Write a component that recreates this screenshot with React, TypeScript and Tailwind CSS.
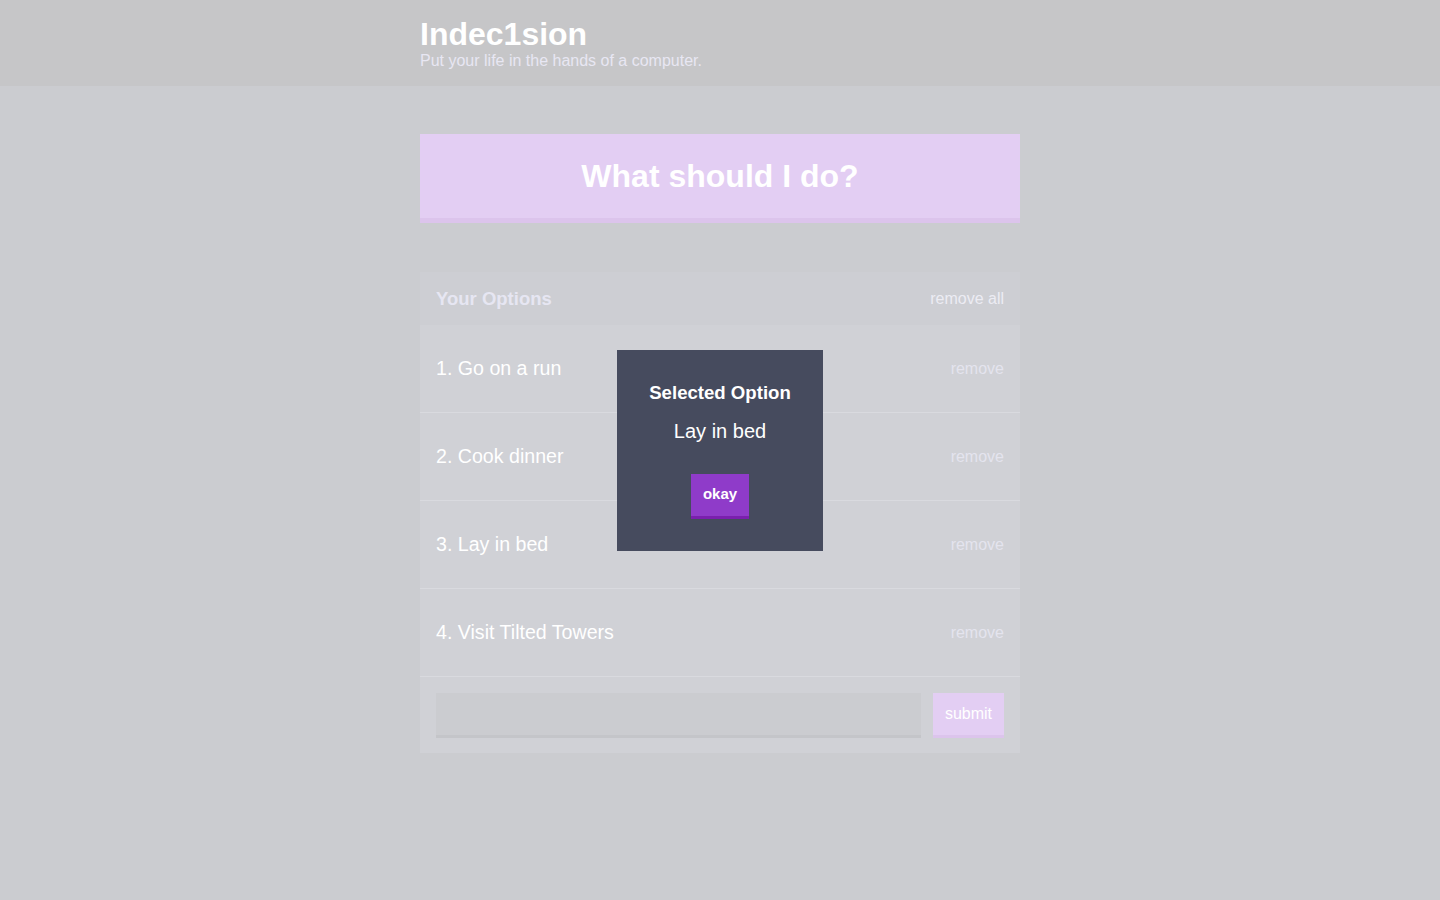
import React from "react";

const options = ["Go on a run", "Cook dinner", "Lay in bed", "Visit Tilted Towers"];

export default function App() {
  return (
    <div
      className="min-h-[900px] bg-[#cbccd0]"
      style={{ fontFamily: '"Liberation Sans", Arial, Helvetica, sans-serif' }}
    >
      <header className="bg-[#c6c6c8] py-4">
        <div className="mx-auto w-[600px]">
          <h1 className="text-[32px] leading-[36px] font-bold text-white">Indec1sion</h1>
          <p className="text-[16px] leading-[18px] text-[#e8e7f3]">Put your life in the hands of a computer.</p>
        </div>
      </header>

      <main className="mx-auto w-[600px] pt-12">
        <button className="block w-full bg-[#e3cef3] border-b-[5px] border-[#dcc4ec] py-6 text-center text-[32px] leading-[36px] font-bold text-white">
          What should I do?
        </button>

        <div className="mt-[49px] bg-[#d0d1d6]">
          <div className="flex items-center justify-between bg-[#cdced3] px-4 h-[53px]">
            <h3 className="text-[18.5px] font-bold text-[#e6e6f2]">Your Options</h3>
            <button className="text-[16px] text-[#ececf3]">remove all</button>
          </div>
          {options.map((o, i) => (
            <div
              key={o}
              className="flex items-center justify-between px-4 h-[88px] border-b border-[#d9dadf]"
            >
              <p className="text-[19.6px] text-white">
                {i + 1}. {o}
              </p>
              <button className="text-[16px] text-[#e4e4ee]">remove</button>
            </div>
          ))}
          <form className="flex items-start gap-3 px-4 pt-4 pb-[15px]">
            <input className="flex-1 h-[45px] bg-[#cbccd0] border-b-[3px] border-[#c4c5c9] outline-none" />
            <button
              type="button"
              className="w-[71px] h-[45px] bg-[#e3cef3] border-b-[3px] border-[#dcc4ec] text-[16px] text-white"
            >
              submit
            </button>
          </form>
        </div>
      </main>

      <div className="fixed inset-0 flex items-center justify-center">
        <div className="w-[206px] bg-[#464b5e] p-8 text-center text-white">
          <h3 className="text-[18.6px] leading-[22px] font-bold mb-[15px]">Selected Option</h3>
          <p className="text-[20px] leading-[24px] mb-[31px]">Lay in bed</p>
          <button className="h-[45px] bg-[#8f3bc9] border-b-[3px] border-[#7a1fae] px-3 text-[15px] font-bold text-white">
            okay
          </button>
        </div>
      </div>
    </div>
  );
}
